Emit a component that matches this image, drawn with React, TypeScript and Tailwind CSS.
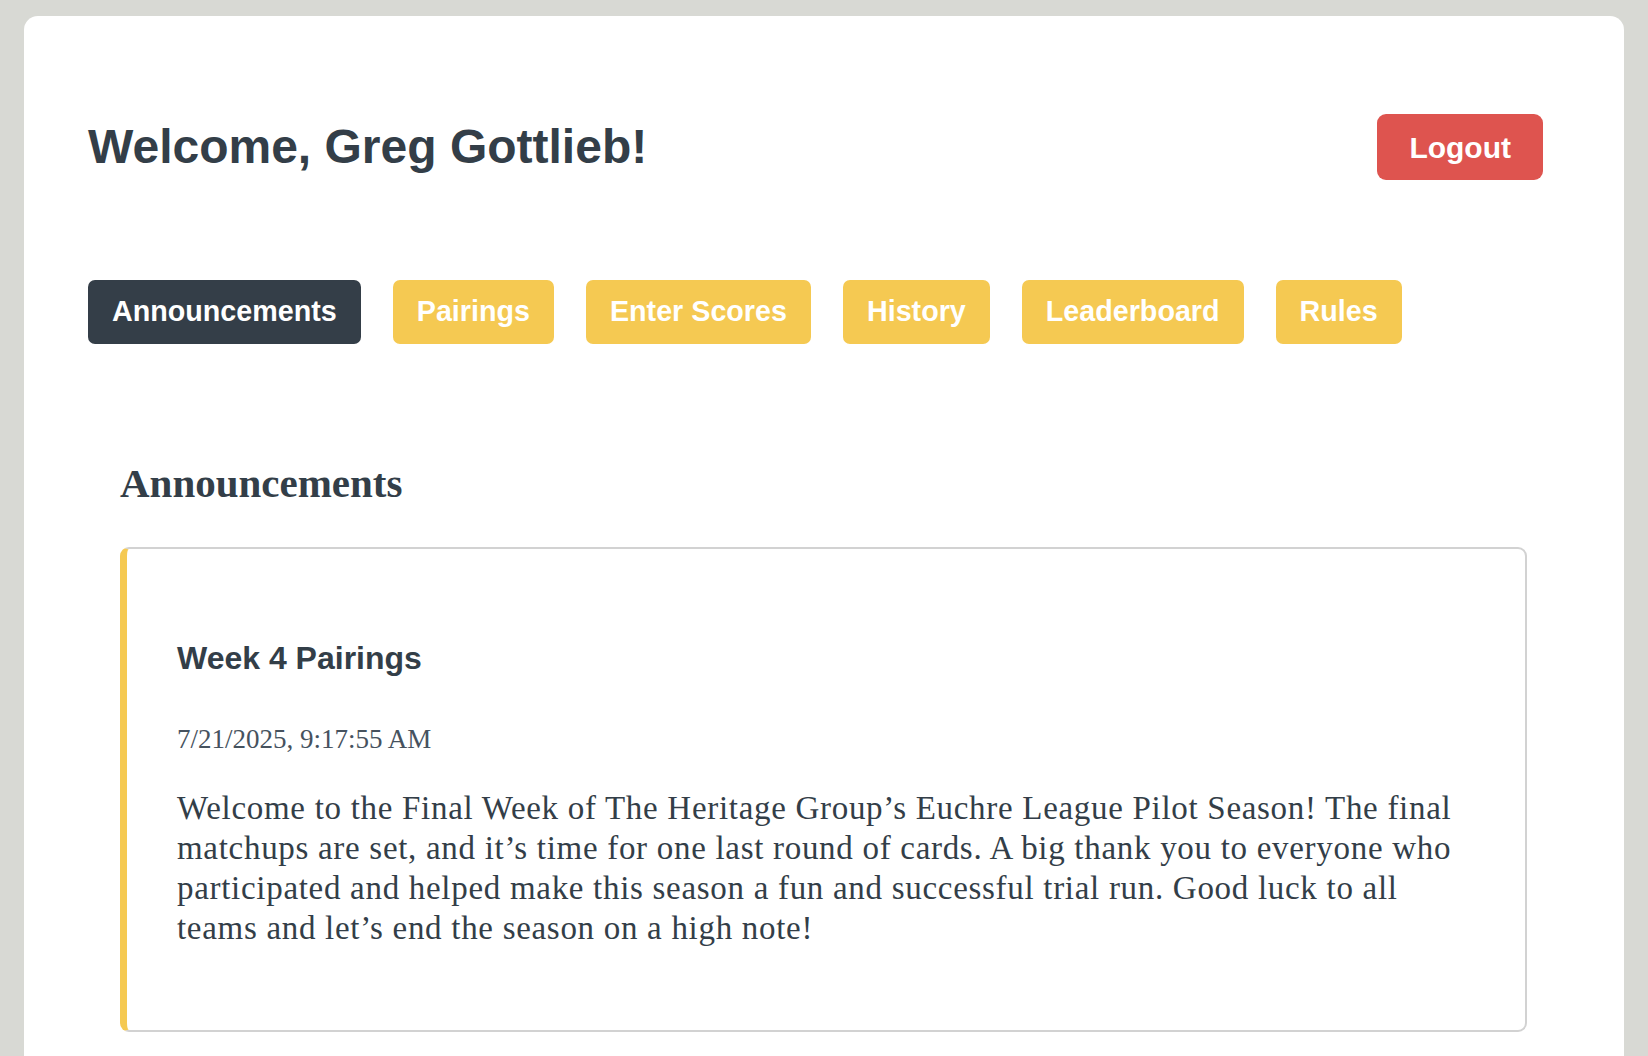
import React from 'react';

const tabs = ["Announcements", "Pairings", "Enter Scores", "History", "Leaderboard", "Rules"];

const App: React.FC = () => {
    const active = "Announcements";

    return (
        <div className="min-h-screen bg-[#d8d9d4] px-[24px] pt-[16px] overflow-hidden">
            <div className="bg-white rounded-t-[14px] min-h-[1100px] pt-[98px] pl-[64px] pr-[81px] text-[#333e48]">
                {/* header */}
                <div className="flex items-center justify-between">
                    <h1 className="font-['Liberation_Sans',Arial,sans-serif] text-[48px] font-bold leading-none">
                        Welcome, Greg Gottlieb!
                    </h1>
                    <button className="h-[66px] px-[32px] rounded-[9px] bg-[#de544f] text-white font-['Liberation_Sans',Arial,sans-serif] text-[30px] font-bold">
                        Logout
                    </button>
                </div>

                {/* tabs */}
                <nav className="mt-[100px] flex gap-[32px]">
                    {tabs.map((t) => (
                        <button
                            key={t}
                            className={
                                t === active
                                    ? "h-[64px] px-[24px] rounded-[7px] bg-[#343e48] text-white font-['Liberation_Sans',Arial,sans-serif] text-[28.7px] font-bold"
                                    : "h-[64px] px-[24px] rounded-[7px] bg-[#f5c952] text-white font-['Liberation_Sans',Arial,sans-serif] text-[28.7px] font-bold"
                            }
                        >
                            {t}
                        </button>
                    ))}
                </nav>

                {/* announcements section */}
                <section className="mt-[116px] ml-[32px] mr-[16px]">
                    <h2 className="font-['Liberation_Serif','Times_New_Roman',serif] text-[41px] font-bold leading-[46px]">
                        Announcements
                    </h2>

                    <div className="mt-[41px] border-2 border-[#d2d2d2] border-l-[7px] border-l-[#f5c952] rounded-[9px] pt-[91px] pb-[82px] pl-[50px] pr-[50px]">
                        <h3 className="font-['Liberation_Sans',Arial,sans-serif] text-[32px] font-bold leading-[36px]">
                            Week 4 Pairings
                        </h3>
                        <p className="mt-[48px] font-['Liberation_Serif','Times_New_Roman',serif] text-[27px] leading-[30px] text-[#46525e]">
                            7/21/2025, 9:17:55 AM
                        </p>
                        <p className="mt-[34px] font-['Liberation_Serif','Times_New_Roman',serif] text-[33px] tracking-[0.7px] leading-[40px]">
                            Welcome to the Final Week of The Heritage Group’s Euchre League Pilot Season! The final matchups are set, and it’s time for one last round of cards. A big thank you to everyone who participated and helped make this season a fun and successful trial run. Good luck to all teams and let’s end the season on a high note!
                        </p>
                    </div>
                </section>
            </div>
        </div>
    );
};

export default App;
